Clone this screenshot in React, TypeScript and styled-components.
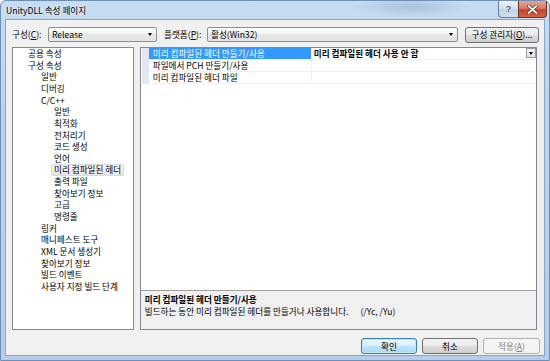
import React from 'react';
import styled, { createGlobalStyle, css } from 'styled-components';

const GlobalStyle = createGlobalStyle`
  html, body { margin: 0; padding: 0; background: #ffffff; }
  body { font-family: "Noto Sans CJK KR", "Liberation Sans", sans-serif; color: #000; }
`;

const FS = '8.6px';

const Frame = styled.div`
  width: 550px; height: 361px; box-sizing: border-box;
  display: flex; flex-direction: column;
  padding: 0 4px 4px 4px;
  border: 1px solid #6f8fb5;
  border-radius: 6px 6px 0 0;
  background:
    radial-gradient(ellipse 60px 10px at 410px 6px, rgba(90, 120, 160, 0.25), transparent),
    linear-gradient(180deg, #c7dcf2 0%, #bcd4ee 30%, #b5cdea 100%);
`;

const TitleBar = styled.div`
  height: 18px; display: flex; align-items: flex-start;
`;

const TitleText = styled.div`
  font-size: 8.6px; line-height: 19px; padding-left: 1px;
  text-shadow: 0 0 5px rgba(255, 255, 255, 0.9);
`;

const TitleButtons = styled.div`
  margin-left: auto; margin-right: -2px; display: flex;
`;

const CaptionButton = styled.div<{ $close?: boolean }>`
  height: 17px; box-sizing: border-box;
  display: flex; align-items: center; justify-content: center;
  border: 1px solid #6a7d98; border-top: none;
  ${p => p.$close ? css`
    width: 29px;
    border-color: #70322a;
    border-radius: 0 0 4px 0;
    background: linear-gradient(180deg, #e7a697 0%, #d87a66 45%, #c5452f 55%, #d0613f 100%);
  ` : css`
    width: 20px;
    border-right: none;
    border-radius: 0 0 0 4px;
    background: linear-gradient(180deg, #eef3f9 0%, #d6e2f0 45%, #c2d3e7 55%, #cfdff0 100%);
  `}
`;

const HelpGlyph = styled.span`
  font-family: "Liberation Sans", sans-serif;
  font-size: 9px; font-weight: bold; color: #4e5b6e; line-height: 1;
  text-shadow: 0 0 2px #fff;
`;

const Client = styled.div`
  flex: 1; display: flex; flex-direction: column;
  background: #f0f0f0; border: 1px solid #8ba4c3;
`;

const Toolbar = styled.div`
  margin-top: 7px; height: 15px; padding-left: 6px;
  display: flex; align-items: center;
  font-size: ${FS}; line-height: 13px;
`;

const Label = styled.span<{ $w: number }>`
  width: ${p => p.$w}px; white-space: nowrap;
`;

const Key = styled.span`
  text-decoration: underline;
`;

const Combo = styled.div<{ $w: number }>`
  width: ${p => p.$w}px; height: 15px; box-sizing: border-box;
  display: flex; align-items: center; padding: 0 4px 0 3px;
  border: 1px solid #8e8f8f; border-radius: 2px;
  background: linear-gradient(180deg, #fdfdfd 0%, #f3f3f3 50%, #e8e8e8 50%, #e3e3e3 100%);
  margin-right: 7px;
`;

const ComboText = styled.span`
  flex: 1; white-space: nowrap;
`;

const Arrow = styled.span`
  width: 0; height: 0;
  border-left: 2.5px solid transparent; border-right: 2.5px solid transparent;
  border-top: 3px solid #000;
`;

const Button = styled.div<{ $w: number; $kind?: 'default' | 'disabled' }>`
  width: ${p => p.$w}px; height: 16px; box-sizing: border-box;
  display: flex; align-items: center; justify-content: center;
  font-size: ${FS}; line-height: 13px; white-space: nowrap;
  border: 1px solid #707070; border-radius: 3px;
  background: linear-gradient(180deg, #f2f2f2 0%, #ebebeb 50%, #dddddd 50%, #cfcfcf 100%);
  ${p => p.$kind === 'default' && css`
    border-color: #3c7fb1;
    background: linear-gradient(180deg, #eaf6fd 0%, #d9f0fc 50%, #bee6fd 50%, #a7d9f5 100%);
    box-shadow: inset 0 0 0 1px #c2e4f6;
  `}
  ${p => p.$kind === 'disabled' && css`
    border-color: #adb2b5; color: #838383;
    background: #f4f4f4;
  `}
`;

const Main = styled.div`
  margin-top: 5px; height: 283px; padding: 0 7px 0 6px;
  display: flex; gap: 6px;
`;

const Tree = styled.div`
  width: 122px; box-sizing: border-box;
  background: #fff; border: 1px solid #828790;
  font-size: ${FS};
`;

const TreeItem = styled.div<{ $level: number }>`
  height: 11.65px; display: flex; align-items: center;
  padding-left: ${p => 15 + p.$level * 13}px;
  white-space: nowrap;
`;

const TreeLabel = styled.span<{ $selected?: boolean }>`
  line-height: 9.6px; margin-left: -3px; padding: 0 2px 0 2px;
  border: 1px solid transparent; border-radius: 2px;
  ${p => p.$selected && css`
    border-color: #d9d9d9;
    background: linear-gradient(180deg, #fafafa 0%, #e6e6e6 100%);
  `}
`;

const Panel = styled.div`
  width: 398px; box-sizing: border-box;
  display: flex; flex-direction: column;
  border: 1px solid #828790;
`;

const Grid = styled.div`
  height: 242px; background: #fff; padding-left: 1px;
  font-size: ${FS};
`;

const Row = styled.div`
  height: 12px; display: flex;
`;

const Gutter = styled.div`
  width: 7px; background: #e1e7f3;
`;

const NameCell = styled.div<{ $selected?: boolean }>`
  width: 163px; box-sizing: border-box; padding-left: 4px;
  line-height: 11px; white-space: nowrap;
  border-bottom: 1px solid #f0f0f0; border-right: 1px solid #f0f0f0;
  ${p => p.$selected && css`
    background: #3399ff; color: #fff;
  `}
`;

const ValueCell = styled.div`
  flex: 1; box-sizing: border-box; padding-left: 2px;
  display: flex; align-items: flex-start;
  line-height: 11px; font-weight: bold; white-space: nowrap;
  border-bottom: 1px solid #f0f0f0;
`;

const ValueText = styled.span`
  flex: 1;
`;

const DropButton = styled.div`
  width: 10px; height: 10px; box-sizing: border-box;
  display: flex; align-items: center; justify-content: center;
  border: 1px solid #9a9a9a;
  background: linear-gradient(180deg, #f7f7f7, #e3e3e3);
`;

const Description = styled.div`
  flex: 1; border-top: 1px solid #a0a0a0;
  padding: 2px 0 0 4px; font-size: ${FS}; line-height: 12px;
`;

const DescTitle = styled.div`
  font-weight: bold;
`;

const Switches = styled.span`
  margin-left: 12px;
`;

const Buttons = styled.div`
  margin-top: 8px; padding-right: 4px;
  display: flex; justify-content: flex-end; gap: 5px;
`;

const treeItems: [string, number, boolean?][] = [
  ['공용 속성', 0], ['구성 속성', 0], ['일반', 1], ['디버깅', 1], ['C/C++', 1],
  ['일반', 2], ['최적화', 2], ['전처리기', 2], ['코드 생성', 2], ['언어', 2],
  ['미리 컴파일된 헤더', 2, true], ['출력 파일', 2], ['찾아보기 정보', 2], ['고급', 2], ['명령줄', 2],
  ['링커', 1], ['매니페스트 도구', 1], ['XML 문서 생성기', 1], ['찾아보기 정보', 1],
  ['빌드 이벤트', 1], ['사용자 지정 빌드 단계', 1],
];

const rows = [
  { name: '미리 컴파일된 헤더 만들기/사용', value: '미리 컴파일된 헤더 사용 안 함', selected: true },
  { name: '파일에서 PCH 만들기/사용', value: '' },
  { name: '미리 컴파일된 헤더 파일', value: '' },
];

export default function App() {
  return (
    <>
      <GlobalStyle />
      <Frame>
        <TitleBar>
          <TitleText>UnityDLL 속성 페이지</TitleText>
          <TitleButtons>
            <CaptionButton><HelpGlyph>?</HelpGlyph></CaptionButton>
            <CaptionButton $close>
              <svg width="11" height="9" viewBox="0 0 11 9">
                <path d="M1.5 1 L9.5 8 M9.5 1 L1.5 8" stroke="#5a1f18" strokeWidth="3.2" strokeLinecap="round" />
                <path d="M1.5 1 L9.5 8 M9.5 1 L1.5 8" stroke="#ffffff" strokeWidth="1.8" strokeLinecap="round" />
              </svg>
            </CaptionButton>
          </TitleButtons>
        </TitleBar>
        <Client>
          <Toolbar>
            <Label $w={36}>구성(<Key>C</Key>):</Label>
            <Combo $w={109}><ComboText>Release</ComboText><Arrow /></Combo>
            <Label $w={43}>플랫폼(<Key>P</Key>):</Label>
            <Combo $w={251}><ComboText>활성(Win32)</ComboText><Arrow /></Combo>
            <Button $w={74}>구성 관리자(<Key>O</Key>)...</Button>
          </Toolbar>
          <Main>
            <Tree>
              {treeItems.map(([label, level, selected], i) => (
                <TreeItem key={i} $level={level}>
                  <TreeLabel $selected={selected}>{label}</TreeLabel>
                </TreeItem>
              ))}
            </Tree>
            <Panel>
              <Grid>
                {rows.map(r => (
                  <Row key={r.name}>
                    <Gutter />
                    <NameCell $selected={r.selected}>{r.name}</NameCell>
                    <ValueCell>
                      <ValueText>{r.value}</ValueText>
                      {r.selected && <DropButton><Arrow /></DropButton>}
                    </ValueCell>
                  </Row>
                ))}
              </Grid>
              <Description>
                <DescTitle>미리 컴파일된 헤더 만들기/사용</DescTitle>
                <div>빌드하는 동안 미리 컴파일된 헤더를 만들거나 사용합니다.<Switches>(/Yc, /Yu)</Switches></div>
              </Description>
            </Panel>
          </Main>
          <Buttons>
            <Button $w={56} $kind="default">확인</Button>
            <Button $w={56}>취소</Button>
            <Button $w={57} $kind="disabled">적용(<Key>A</Key>)</Button>
          </Buttons>
        </Client>
      </Frame>
    </>
  );
}
